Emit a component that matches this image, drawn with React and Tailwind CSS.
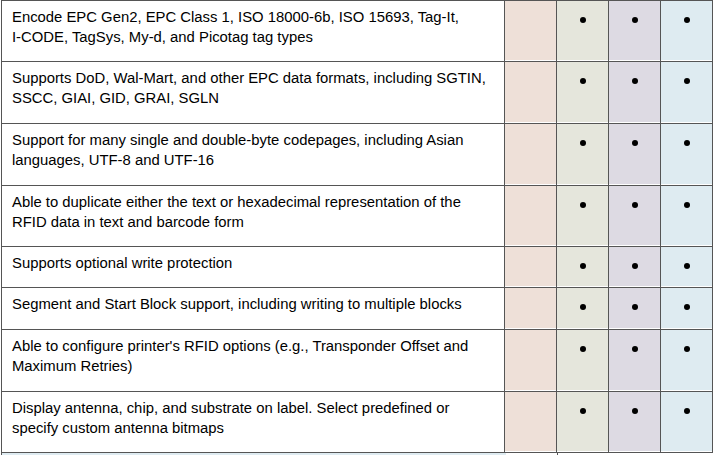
const rows = [
  {
    h: "h-[61px]",
    lines: [
      "Encode EPC Gen2, EPC Class 1, ISO 18000-6b, ISO 15693, Tag-It,",
      "I-CODE, TagSys, My-d, and Picotag tag types",
    ],
  },
  {
    h: "h-[62px]",
    lines: [
      "Supports DoD, Wal-Mart, and other EPC data formats, including SGTIN,",
      "SSCC, GIAI, GID, GRAI, SGLN",
    ],
  },
  {
    h: "h-[62px]",
    lines: [
      "Support for many single and double-byte codepages, including Asian",
      "languages, UTF-8 and UTF-16",
    ],
  },
  {
    h: "h-[61px]",
    lines: [
      "Able to duplicate either the text or hexadecimal representation of the",
      "RFID data in text and barcode form",
    ],
  },
  { h: "h-[41px]", lines: ["Supports optional write protection"] },
  {
    h: "h-[42px]",
    lines: ["Segment and Start Block support, including writing to multiple blocks"],
  },
  {
    h: "h-[62px]",
    lines: [
      "Able to configure printer's RFID options (e.g., Transponder Offset and",
      "Maximum Retries)",
    ],
  },
  {
    h: "h-[61px]",
    lines: [
      "Display antenna, chip, and substrate on label. Select predefined or",
      "specify custom antenna bitmaps",
    ],
  },
];

const cols = [
  { bg: "bg-[#eee0d8]", dot: false },
  { bg: "bg-[#e5e6dc]", dot: true },
  { bg: "bg-[#dddae3]", dot: true },
  { bg: "bg-[#deebf1]", dot: true },
];

function Dot() {
  return <div className="w-[6px] h-[6px] rounded-full bg-black" />;
}

export default function App() {
  return (
    <div
      className="w-[713px] h-[455px] overflow-hidden bg-white pl-px text-black"
      style={{ fontFamily: '"Liberation Sans", Arial, sans-serif' }}
    >
      <div className="border-l border-t border-[#555555]">
        {rows.map((row, i) => (
          <div key={i} className={`flex ${row.h}`}>
            <div className="w-[503px] border-r border-b border-[#555555] pl-[10px] pt-[6px] text-[14.85px] leading-[20px] whitespace-nowrap">
              {row.lines.map((l, j) => (
                <div key={j}>{l}</div>
              ))}
            </div>
            {cols.map((c, j) => (
              <div
                key={j}
                className={`w-[52px] border-r border-b border-[#555555] ${c.bg} shadow-[inset_0_-1px_0_#fff] flex justify-center pt-[16px]`}
              >
                {c.dot && <Dot />}
              </div>
            ))}
          </div>
        ))}
        <div className="flex h-[2px]">
          <div className="w-[504px] bg-[#deebf1]" />
          <div className="w-[52px] border-r border-[#555555]" />
        </div>
      </div>
    </div>
  );
}
